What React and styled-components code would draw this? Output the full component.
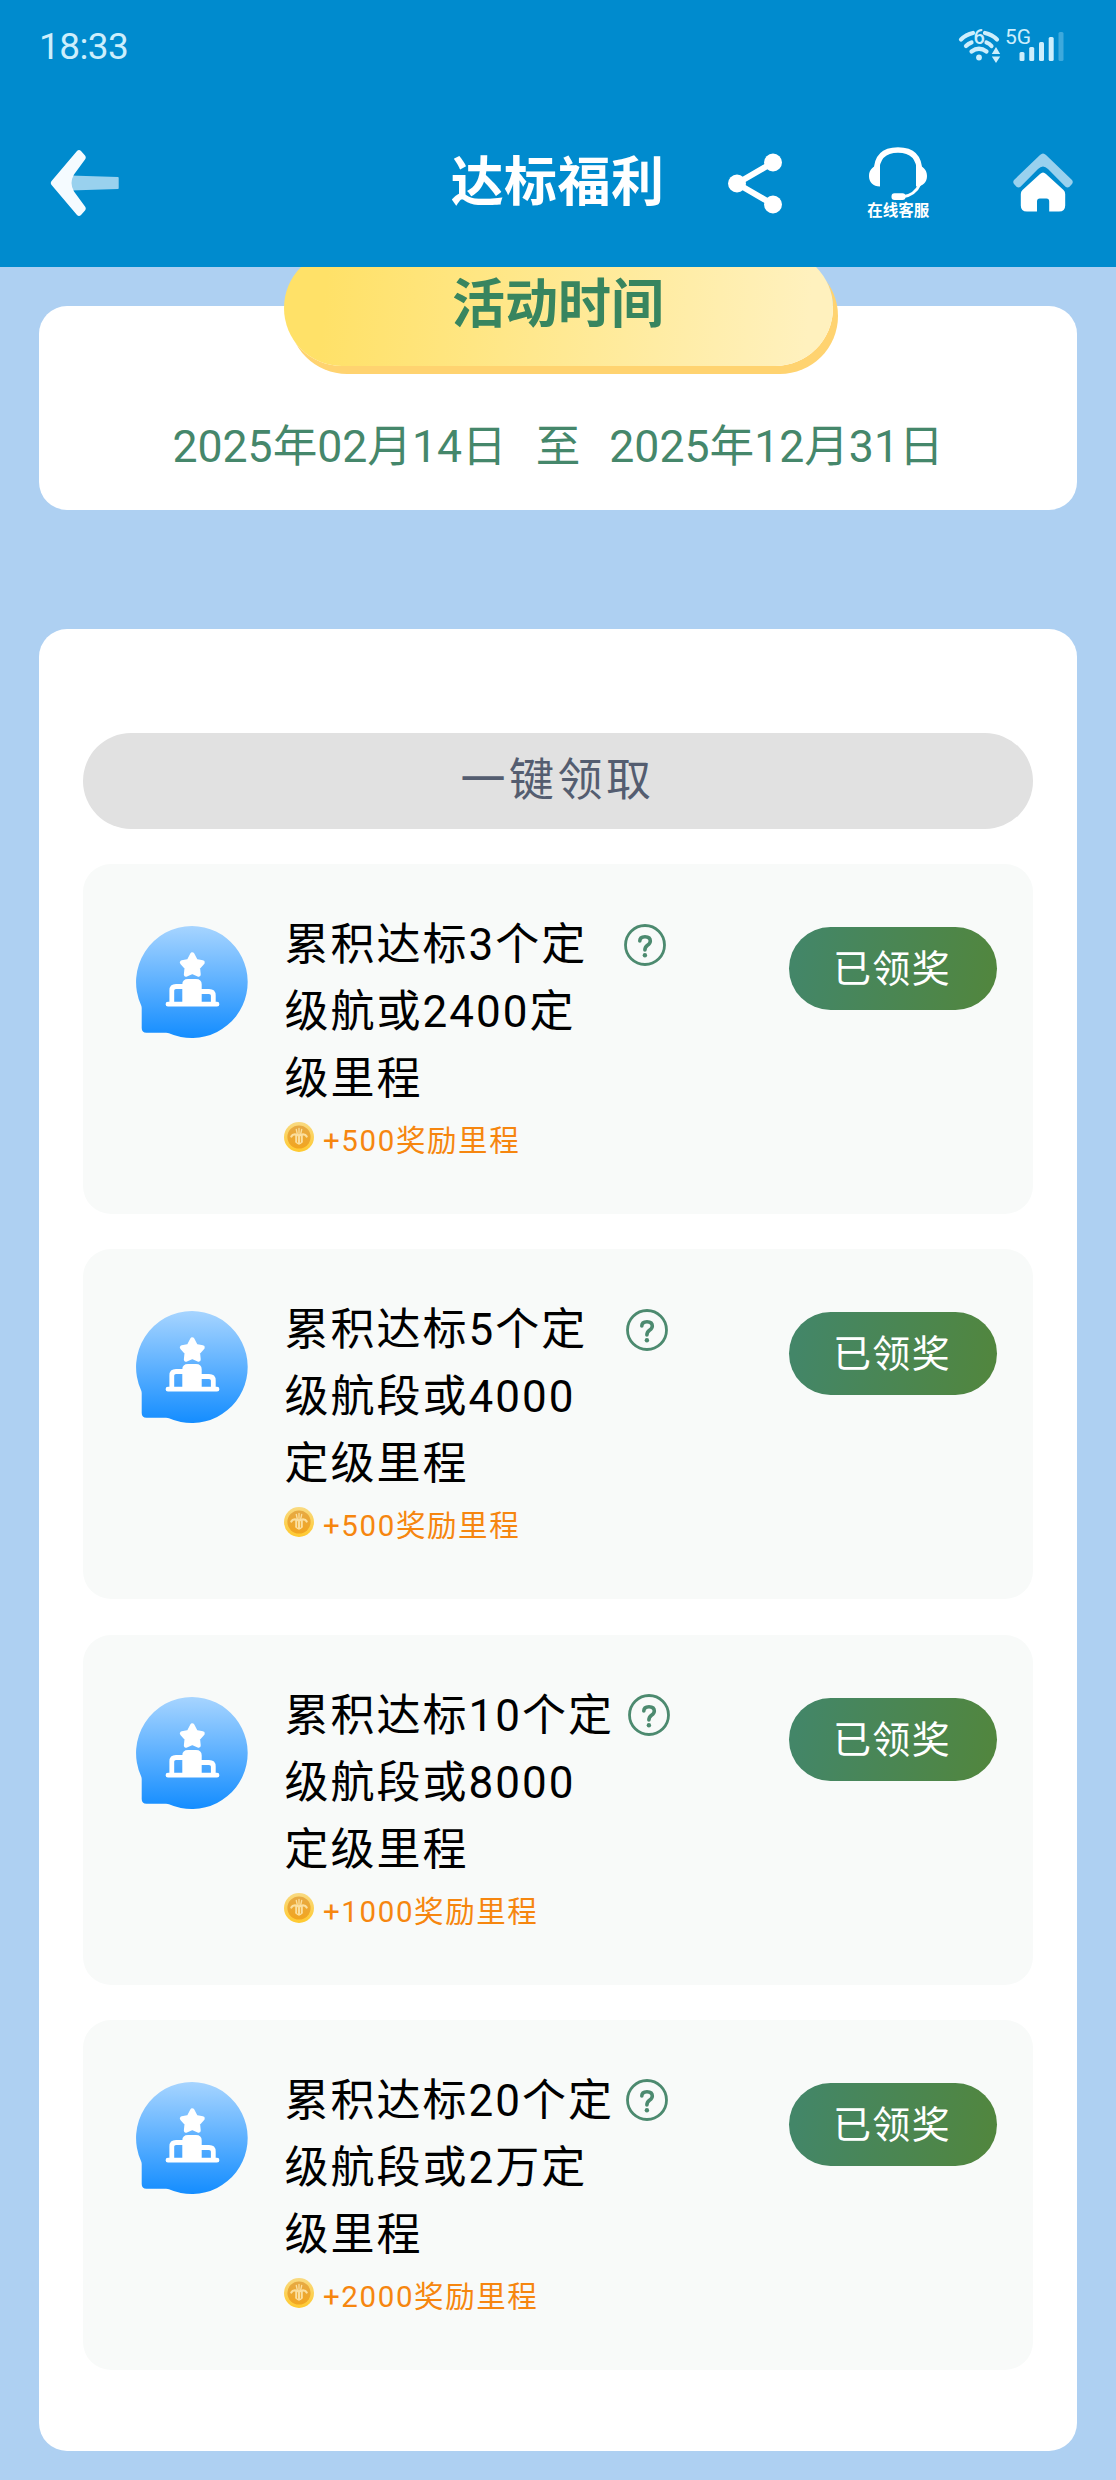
import React from 'react';
import styled, { createGlobalStyle } from 'styled-components';

const GlobalStyle = createGlobalStyle`
    * {
        box-sizing: border-box;
    }

    body {
        margin: 0;
        background: #aed0f2;
        font-family: Roboto, 'Noto Sans CJK SC', sans-serif;
    }

    svg {
        display: block;
        flex: none;
    }
`;

const StPage = styled.div`
    width: 1116px;
    height: 2480px;
    overflow: hidden;
    background: #aed0f2;
`;

const StHeader = styled.header`
    position: relative;
    z-index: 1;
    height: 267px;
    background: #008bce;
`;

const StStatusBar = styled.div`
    display: flex;
    justify-content: space-between;
    height: 100px;
    padding: 25px 51px 0 39px;
    color: #cdeefc;
`;

const StClock = styled.span`
    font-size: 37px;
    line-height: 44px;
    letter-spacing: -0.6px;
`;

const StNav = styled.nav`
    display: grid;
    grid-template-columns: 1fr auto 1fr;
    align-items: center;
    height: 166px;
    padding: 0 42px 0 50px;
`;

const StNavTitle = styled.h1`
    margin: 0 9px 1px 0;
    font-size: 53px;
    line-height: 60px;
    font-weight: 700;
    letter-spacing: 0.4px;
    color: #fff;
`;

const StActions = styled.div`
    display: flex;
    align-items: center;
    justify-content: space-between;
    padding-left: 55px;
`;

const StService = styled.div`
    display: flex;
    flex-direction: column;
    align-items: center;
    width: 62px;
    margin-left: 1px;
    color: #fff;
    font-size: 15.5px;
    line-height: 18px;
    font-weight: 700;
    white-space: nowrap;
`;

const StMain = styled.main`
    display: flex;
    flex-direction: column;
    gap: 119px;
    padding: 39px;
`;

const StCard = styled.section`
    display: flex;
    flex-direction: column;
    border-radius: 28px;
    background: #fff;
`;

const StPeriodCard = styled(StCard)`
    align-items: center;
    height: 204px;
`;

const StRibbon = styled.h2`
    width: 549px;
    height: 116px;
    margin: -56px 0 0;
    border-radius: 58px;
    background: linear-gradient(95deg, #ffe168 8%, #fff1be 95%);
    box-shadow: 5px 8px 0 #ffd370;
    font-size: 53px;
    line-height: 110px;
    font-weight: 700;
    text-align: center;
    color: #38855f;
`;

const StPeriod = styled.div`
    display: flex;
    gap: 29px;
    margin-top: 51px;
    font-size: 44.6px;
    line-height: 60px;
    color: #45876b;
`;

const StTaskCard = styled(StCard)`
    height: 1822px;
    padding: 104px 44px 0;
`;

const StClaimAll = styled.button`
    height: 96px;
    padding: 0 1px 9px 0;
    border: 0;
    border-radius: 48px;
    background: #e1e1e1;
    font-family: inherit;
    font-size: 45px;
    letter-spacing: 3.5px;
    color: #545d70;
`;

const StTaskList = styled.div`
    display: flex;
    flex-direction: column;
    gap: 35.3px;
    margin-top: 35px;
`;

const StTask = styled.div`
    display: flex;
    align-items: flex-start;
    height: 350px;
    padding: 48px 36px 0 52px;
    border-radius: 28px;
    background: #f8faf9;
`;

const StAvatar = styled.div`
    margin-top: 13px;
`;

const StTaskBody = styled.div`
    width: 333px;
    margin-left: 35.5px;
`;

const StTaskTitle = styled.div`
    font-size: 44px;
    line-height: 67px;
    letter-spacing: 2px;
    color: #000;
`;

const StReward = styled.div`
    display: flex;
    align-items: center;
    gap: 9.5px;
    margin-top: 9px;
    font-size: 29.5px;
    line-height: 36px;
    letter-spacing: 1.6px;
    white-space: nowrap;
    color: #f6860f;

    svg {
        margin: 0 0 8px -1px;
    }
`;

const StHelp = styled.div`
    margin: 11.5px 0 0 ${props => props.$gap}px;
`;

const StClaimed = styled.button`
    width: 208px;
    height: 83px;
    margin: 15px 0 0 auto;
    padding: 0 2px 6px 0;
    border: 0;
    border-radius: 42px;
    background: linear-gradient(98deg, #438668 5%, #51863f 95%);
    font-family: inherit;
    font-size: 38px;
    letter-spacing: 1.3px;
    color: #fff;
`;

const TASKS = [
    { title: '累积达标3个定级航或2400定级里程', reward: 500, helpGap: 6 },
    { title: '累积达标5个定级航段或4000定级里程', reward: 500, helpGap: 8.5 },
    { title: '累积达标10个定级航段或8000定级里程', reward: 1000, helpGap: 10 },
    { title: '累积达标20个定级航段或2万定级里程', reward: 2000, helpGap: 8 }
];

const StatusIcons = () => (
    <svg width="108" height="40" viewBox="957 25 108 40" fill="#cdeefc">
        <g fill="none" stroke="#cdeefc" strokeWidth="4.200" strokeLinecap="round">
            <path d="M961 39.5Q966 34.5 973 33M985 33Q992 34.5 997 39.5" />
            <path d="M966 46Q968.500 43.500 971.500 42.500M986.500 42.500Q989.500 43.500 991.500 46" />
            <path d="M971.500 51.500Q979 46 986.500 51.500" />
        </g>
        <circle cx="979" cy="57.500" r="2.900" />
        <text x="973.500" y="43.500" fontSize="20" fontWeight="500" fontFamily="Roboto">6</text>
        <path d="M996 47l4.200 7h-8.400zM996 63l4.200-6.500h-8.400z" />
        <text x="1005" y="44" fontSize="21" fontFamily="Roboto">5G</text>
        <rect x="1019.500" y="52" width="5" height="9" rx="1.500" />
        <rect x="1029.200" y="47" width="5" height="14" rx="1.500" />
        <rect x="1039" y="42" width="5" height="19" rx="1.500" />
        <rect x="1048.700" y="37" width="5" height="24" rx="1.500" />
        <rect x="1058.500" y="32" width="5" height="29" rx="1.500" opacity="0.300" />
    </svg>
);

const BackIcon = () => (
    <svg width="70" height="68" viewBox="50 149 70 68">
        <path d="M70 175.500L118 177Q118.700 177 118.700 178V188Q118.700 189 118 189L70 190.500z" fill="#99d1ee" />
        <path
            d="M77 151Q79 149 81 151L85 155.500Q86.500 157.500 85 159.500L74 174.500Q69 183 74 191.500L85 206.500Q86.500 208.500 85 210.500L81 215Q79 217 77 215L52 185.500Q49.500 183 52 180.500z"
            fill="#f5fbff"
        />
    </svg>
);

const ShareIcon = () => (
    <svg width="55" height="61" viewBox="729 152.500 55 61" fill="#fff">
        <path d="M774 162L738 183L774 204" fill="none" stroke="#fff" strokeWidth="6" />
        <circle cx="738" cy="183" r="9" />
        <circle cx="774" cy="162" r="9" />
        <circle cx="774" cy="204" r="9" />
    </svg>
);

const HeadsetIcon = () => (
    <svg width="60" height="56" viewBox="869 146 60 56" fill="#fff">
        <path d="M877.500 170V172Q877.500 150 899 150Q920.500 150 920.500 172" fill="none" stroke="#fff" strokeWidth="5.600" />
        <path d="M881 165V186.500C874 186.500 870 182 870 176S874 165.500 881 165zM917 165V186.500C924 186.500 928 182 928 176S924 165.500 917 165z" />
        <path d="M921 184Q916 195 904 196.800" fill="none" stroke="#fff" strokeWidth="3" />
        <rect x="892.500" y="193.300" width="14" height="6.700" rx="3" />
    </svg>
);

const HomeIcon = () => (
    <svg width="62" height="60" viewBox="1013 152.500 62 60">
        <path
            d="M1041 154.500Q1044 151.500 1047 154.500L1073 179.500Q1074.500 181.500 1073 183.500L1070.500 186.200Q1068.500 187.800 1066.500 186.200L1049 168.500Q1044 163.500 1039 168.500L1021.500 186.200Q1019.500 187.800 1017.500 186.200L1015 183.500Q1013.500 181.500 1015 179.500z"
            fill="#99d1ee"
        />
        <path
            d="M1041 173.500Q1044 170.500 1047 173.500L1064.500 189.500Q1066.200 191 1066.200 193.500V205Q1066.200 211 1060 211H1050.200V201Q1050.200 198 1047.500 198H1040.800Q1038 198 1038 201V211H1028Q1021.800 211 1021.800 205V193.500Q1021.800 191 1023.500 189.500z"
            fill="#fff"
        />
    </svg>
);

const PodiumIcon = () => (
    <svg width="114" height="114" viewBox="0 0 114 114">
        <defs>
            <linearGradient id="podium-bg" x1="0" y1="0" x2="0" y2="113" gradientUnits="userSpaceOnUse">
                <stop offset="0" stopColor="#a8d5ff" />
                <stop offset="1" stopColor="#148dff" />
            </linearGradient>
        </defs>
        <path
            d="M57 1A56 56 0 1 1 34 108.200Q33 107.700 31 107.700H11.500Q6.700 107.700 6.700 103V83Q6.700 81.500 6 80A56 56 0 0 1 57 1z"
            fill="url(#podium-bg)"
        />
        <path
            d="M57.300 29.500L60.800 36.200L67.500 37.500L62.800 42.800L63.500 49.500L57.300 46.800L51.100 49.500L51.800 42.800L47.100 37.500L53.800 36.200z"
            fill="#fff"
            stroke="#fff"
            strokeWidth="4.500"
            strokeLinejoin="round"
        />
        <path d="M47.300 79V59.500Q47.300 54 53 54H61Q66.700 54 66.700 59.500V79z" fill="#fff" />
        <g fill="none" stroke="#fff" strokeWidth="4.800" strokeLinecap="round">
            <path d="M36.800 78V65.500Q36.800 61.500 41 61.500H48M66 66.500H74Q78.300 66.500 78.300 70.500V78M33 79.200H82" />
        </g>
    </svg>
);

const CoinIcon = () => (
    <svg width="30" height="30" viewBox="0 0 30 30">
        <defs>
            <linearGradient id="coin-rim" x1="0" y1="0" x2="0" y2="1">
                <stop offset="0" stopColor="#f9da82" />
                <stop offset="1" stopColor="#ffc92e" />
            </linearGradient>
            <linearGradient id="coin-face" x1="0" y1="0" x2="0" y2="1">
                <stop offset="0" stopColor="#e6aa45" />
                <stop offset="1" stopColor="#f2a51f" />
            </linearGradient>
        </defs>
        <circle cx="15" cy="15" r="15" fill="url(#coin-rim)" />
        <circle cx="15" cy="15" r="11.600" fill="url(#coin-face)" />
        <g fill="none" stroke="#fbdf9f" strokeLinecap="round">
            <path d="M7.300 14.500Q8.500 12 12 12.500L15 13.500L18 12.500Q21.500 12 22.700 14.500" strokeWidth="2.200" />
            <path d="M12.300 7.500L13.300 12M15 6.500V12M17.700 7.500L16.700 12" strokeWidth="1.300" />
            <path d="M12.200 13V19.500M15 13V21.500M17.800 13V19.500" strokeWidth="2" />
            <path d="M12 20Q15 23.500 18 20" strokeWidth="1.300" />
        </g>
    </svg>
);

const HelpIcon = () => (
    <svg width="42" height="42" viewBox="0 0 42 42" fill="none" stroke="#4c8a6f" strokeLinecap="round">
        <circle cx="21" cy="21" r="19.500" strokeWidth="2.800" />
        <path d="M15.800 17Q15.800 12.700 21 12.700Q26.300 12.700 26.300 17Q26.300 19.300 23.500 21.300Q20.900 23.200 20.900 26" strokeWidth="3.600" />
        <circle cx="20.900" cy="31.300" r="2.200" fill="#4c8a6f" stroke="none" />
    </svg>
);

const Header = () => (
    <StHeader>
        <StStatusBar>
            <StClock>18:33</StClock>
            <StatusIcons />
        </StStatusBar>
        <StNav>
            <BackIcon />
            <StNavTitle>达标福利</StNavTitle>
            <StActions>
                <ShareIcon />
                <StService>
                    <HeadsetIcon />
                    <span>在线客服</span>
                </StService>
                <HomeIcon />
            </StActions>
        </StNav>
    </StHeader>
);

const Task = props => {
    const { title, reward, helpGap } = props;

    return (
        <StTask>
            <StAvatar>
                <PodiumIcon />
            </StAvatar>
            <StTaskBody>
                <StTaskTitle>{title}</StTaskTitle>
                <StReward>
                    <CoinIcon />
                    <span>+{reward}奖励里程</span>
                </StReward>
            </StTaskBody>
            <StHelp $gap={helpGap}>
                <HelpIcon />
            </StHelp>
            <StClaimed>已领奖</StClaimed>
        </StTask>
    );
};

const App = () => (
    <StPage>
        <GlobalStyle />
        <Header />
        <StMain>
            <StPeriodCard>
                <StRibbon>活动时间</StRibbon>
                <StPeriod>
                    <span>2025年02月14日</span>
                    <span>至</span>
                    <span>2025年12月31日</span>
                </StPeriod>
            </StPeriodCard>
            <StTaskCard>
                <StClaimAll>一键领取</StClaimAll>
                <StTaskList>
                    {TASKS.map(task => (
                        <Task key={task.title} {...task} />
                    ))}
                </StTaskList>
            </StTaskCard>
        </StMain>
    </StPage>
);

export default App;
